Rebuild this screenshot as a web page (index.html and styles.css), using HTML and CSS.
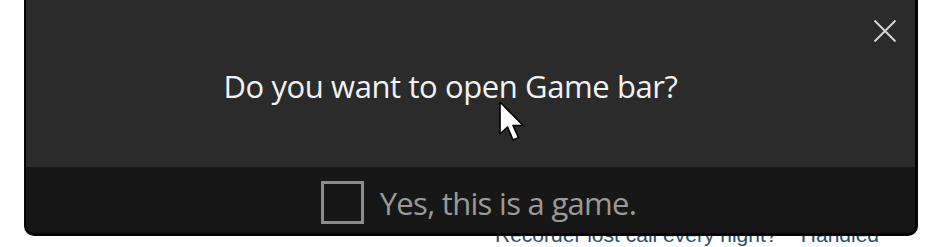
FILE: index.html
```html
<!DOCTYPE html>
<html>
<head>
<meta charset="utf-8">
<link rel="stylesheet" href="styles.css">
</head>
<body>
<div class="page">
  <div class="dialog">
    <div class="top-strip"></div>
    <div class="main">
      <button class="close" aria-label="Close">
        <svg width="24" height="24" viewBox="0 0 24 24"><path d="M1.5 1.5 L22.5 22.5 M22.5 1.5 L1.5 22.5" stroke="#d4d4d4" stroke-width="2" fill="none"/></svg>
      </button>
      <h1 class="title">Do you want to open Game bar?</h1>
      <svg class="cursor" width="30" height="44" viewBox="0 0 30 44"><path d="M2 2 L2 34 L9.5 27 L15 40 L20.5 37.5 L15 25.5 L25 25.5 Z" fill="#fff" stroke="#000" stroke-width="1.6" stroke-linejoin="round"/></svg>
    </div>
    <label class="footer">
      <span class="box"></span>
      <span class="label">Yes, this is a game.</span>
    </label>
  </div>
  <div class="behind"><span>Recorder lost call every night?&nbsp;&nbsp;&nbsp;&nbsp;Handled</span></div>
</div>
</body>
</html>
```
FILE: styles.css
```css
html, body {
  margin: 0;
  padding: 0;
  background: #ffffff;
  font-family: "Open Sans", "Noto Sans", sans-serif;
}
.page {
  width: 928px;
  height: 247px;
  overflow: hidden;
  position: relative;
}
.dialog {
  margin-left: 24px;
  width: 894px;
  height: 236px;
  box-sizing: border-box;
  border: 2px solid #050505;
  border-top: none;
  border-right-width: 3px;
  border-bottom-width: 3px;
  border-radius: 0 0 10px 10px;
  overflow: hidden;
  background: #171717;
  display: flex;
  flex-direction: column;
  position: relative;
}
.top-strip {
  position: absolute;
  left: 411px;
  top: 0;
  width: 490px;
  height: 2px;
  background: #e8eaea;
}
.main {
  height: 167px;
  flex: none;
  background: #2b2b2b;
  position: relative;
  display: flex;
  align-items: flex-start;
  justify-content: center;
  padding-right: 40px;
  box-sizing: border-box;
}
.title {
  margin: 64px 0 0 0;
  font-weight: 400;
  font-size: 31px;
  line-height: 44px;
  color: #f2f2f2;
  letter-spacing: -0.4px;
}
.close {
  position: absolute;
  right: 18px;
  top: 19px;
  width: 24px;
  height: 24px;
  padding: 0;
  border: none;
  background: transparent;
  display: block;
}
.close svg { display: block; }
.cursor {
  position: absolute;
  left: 472px;
  top: 100px;
}
.footer {
  flex: 1;
  display: flex;
  align-items: center;
  justify-content: center;
  gap: 16px;
  padding-top: 5px;
  padding-left: 16px;
}
.box {
  width: 37px;
  height: 37px;
  border: 3px solid #8c8c8c;
  flex: none;
}
.label {
  font-size: 31px;
  color: #9a9a9a;
  letter-spacing: -0.7px;
  line-height: 44px;
}
.behind {
  height: 11px;
  overflow: hidden;
  margin-left: 495px;
  margin-top: 0;
}
.behind span {
  display: block;
  margin-top: -13px;
  font-family: "Liberation Sans", sans-serif;
  font-size: 21px;
  line-height: 24px;
  color: #2a4e6c;
  white-space: nowrap;
}
```
